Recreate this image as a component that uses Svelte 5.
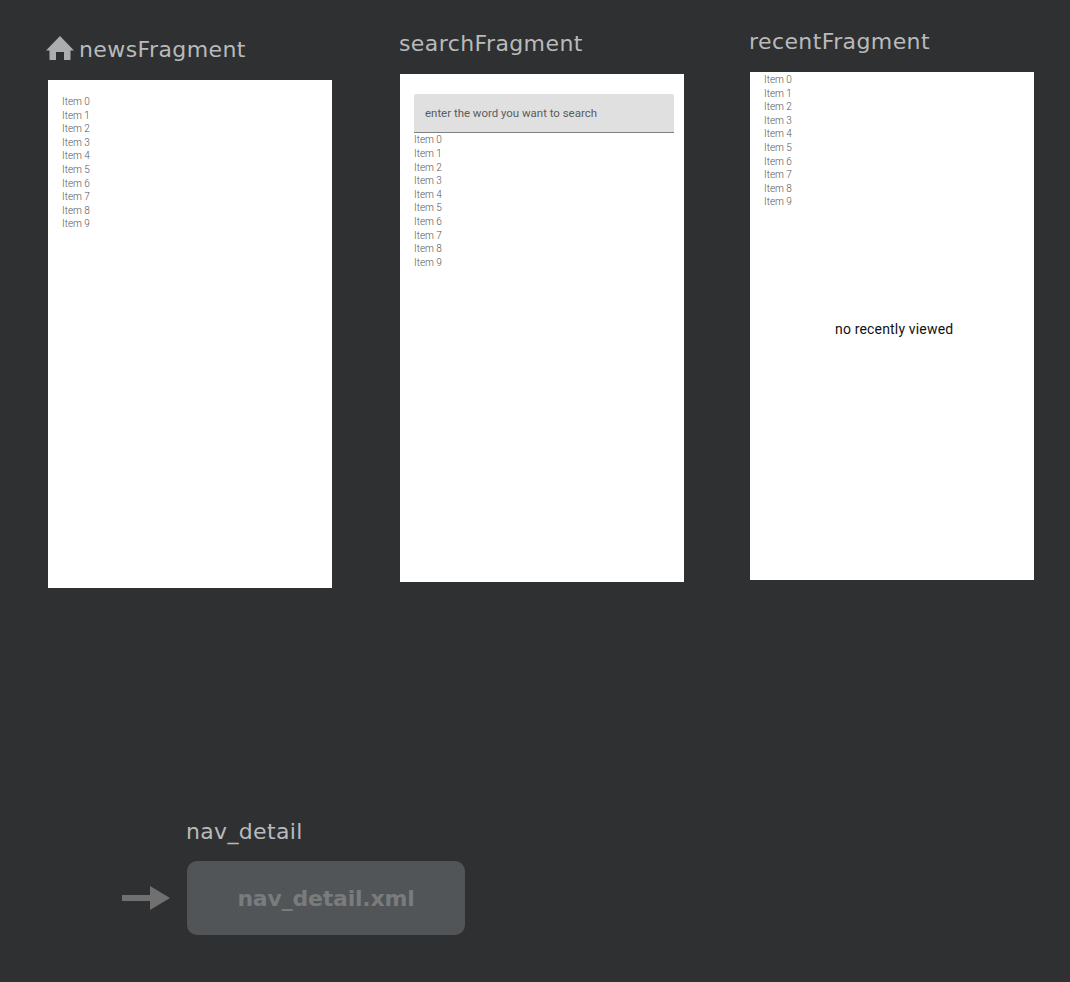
<script>
  const items = Array.from({ length: 10 }, (_, i) => `Item ${i}`);
</script>

<div class="canvas">
  <section class="node news">
    <h2 class="title">
      <svg class="home" viewBox="0 0 28 24" aria-hidden="true">
        <path d="M14 0 L28 14.5 H24.5 V24 H18 V16 H10 V24 H3.5 V14.5 H0 Z" />
      </svg>
      newsFragment
    </h2>
    <div class="phone pad-news">
      <ul class="list">
        {#each items as item}<li>{item}</li>{/each}
      </ul>
    </div>
  </section>

  <section class="node search">
    <h2 class="title">searchFragment</h2>
    <div class="phone pad-search">
      <div class="field">enter the word you want to search</div>
      <ul class="list">
        {#each items as item}<li>{item}</li>{/each}
      </ul>
    </div>
  </section>

  <section class="node recent">
    <h2 class="title">recentFragment</h2>
    <div class="phone pad-recent">
      <ul class="list">
        {#each items as item}<li>{item}</li>{/each}
      </ul>
      <p class="empty">no recently viewed</p>
    </div>
  </section>

  <section class="node detail">
    <h2 class="title">nav_detail</h2>
    <div class="graph">nav_detail.xml</div>
  </section>

  <svg class="arrow" viewBox="0 0 48 24" aria-hidden="true">
    <path d="M0 9 H28 V0 L48 12 L28 24 V15 H0 Z" />
  </svg>
</div>

<style>
  :global(body) {
    margin: 0;
    background: #2f3032;
  }
  .canvas {
    position: relative;
    width: 1070px;
    height: 982px;
    background: #2f3032;
    overflow: hidden;
  }
  .node {
    position: absolute;
    margin: 0;
  }
  .news { left: 48px; top: 32px; }
  .search { left: 400px; top: 26px; }
  .recent { left: 750px; top: 24px; }
  .detail { left: 187px; top: 814px; }

  .title {
    display: flex;
    align-items: center;
    height: 36px;
    margin: 0 0 12px -1px;
    font: 400 22px/36px "DejaVu Sans", sans-serif;
    letter-spacing: 0.4px;
    color: #b9babb;
    white-space: nowrap;
  }
  .news .title { margin-left: -2px; gap: 5px; }
  .detail .title { margin: 0 0 11px -1px; letter-spacing: 0.33px; }
  .home {
    width: 28px;
    height: 24px;
    margin-top: -4px;
    fill: #acadae;
    flex: none;
  }
  .phone {
    position: relative;
    box-sizing: border-box;
    width: 284px;
    height: 508px;
    background: #fff;
    font-family: Roboto, sans-serif;
  }
  .pad-news { padding: 15px 14px; }
  .pad-search { padding: 20px 10px 0 14px; }
  .pad-recent { padding: 1px 14px; }
  .list {
    list-style: none;
    margin: 0;
    padding: 0;
    font-size: 10px;
    font-weight: 300;
    line-height: 13.6px;
    color: #555;
  }
  .pad-search .list { padding-top: 0.4px; }
  .field {
    box-sizing: border-box;
    height: 39px;
    padding: 0 11px;
    background: #e0e0e0;
    border-bottom: 1px solid #7f7f7f;
    border-radius: 2px 2px 0 0;
    font-size: 11.45px;
    line-height: 38px;
    color: #5c5c5c;
  }
  .empty {
    position: absolute;
    left: 85px;
    top: 248px;
    margin: 0;
    font-size: 14px;
    letter-spacing: 0.17px;
    line-height: 18px;
    color: #111;
    white-space: nowrap;
  }
  .graph {
    width: 278px;
    height: 74px;
    border-radius: 10px;
    background: #525558;
    color: #797b7c;
    font: 700 22px/76px "DejaVu Sans", sans-serif;
    letter-spacing: -0.2px;
    text-align: center;
  }
  .arrow {
    position: absolute;
    left: 122px;
    top: 886px;
    width: 48px;
    height: 24px;
    fill: #707070;
  }
</style>
